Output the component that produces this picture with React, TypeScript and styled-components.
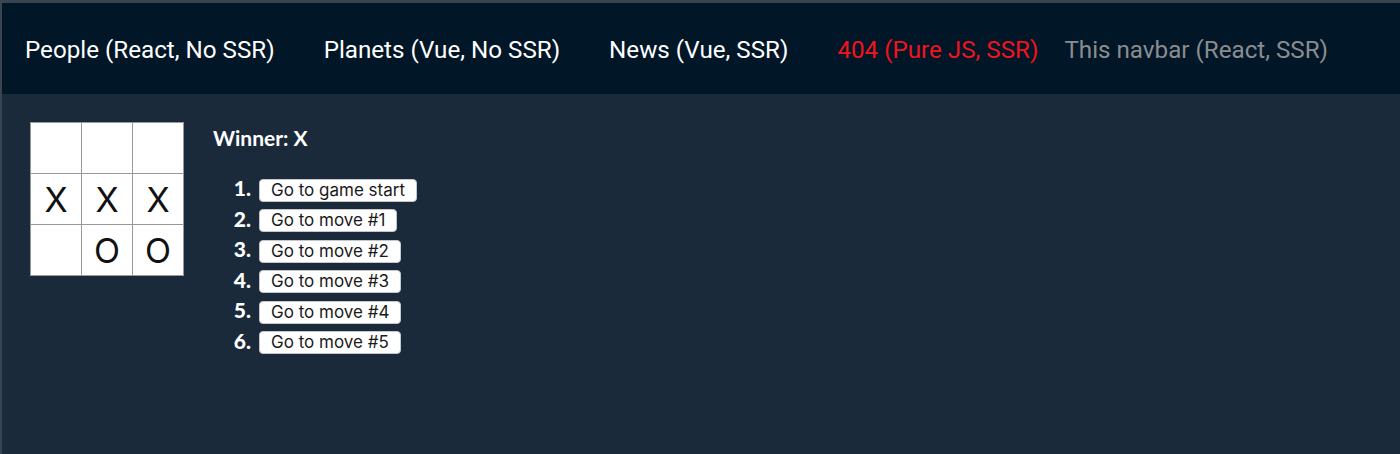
import React from "react";
import styled, { createGlobalStyle } from "styled-components";

const Global = createGlobalStyle`
  html, body { margin: 0; padding: 0; height: 100%; }
  body { background: #1b2a3a; font-family: Inter, "Noto Sans", sans-serif; }
  #root { min-height: 100%; }
`;

const Page = styled.div`
  height: 454px;
  box-sizing: border-box;
  border-top: 3px solid #3a4552;
  border-left: 2px solid #3a4552;
  background: #1b2a3a;
  display: flex;
  flex-direction: column;
`;

const Nav = styled.nav`
  height: 91px;
  background: #011627;
  display: flex;
  align-items: center;
  padding-left: 23px;
  padding-top: 2px;
  box-sizing: border-box;
`;

const NavLink = styled.a<{ $color: string; $gap: number }>`
  font-family: Roboto, "Liberation Sans", sans-serif;
  font-size: 24.2px;
  color: ${(p) => p.$color};
  text-decoration: none;
  margin-right: ${(p) => p.$gap}px;
  white-space: nowrap;
`;

const Game = styled.main`
  display: flex;
  align-items: flex-start;
  padding: 28px 0 0 28px;
  gap: 29px;
`;

const Board = styled.div`
  display: grid;
  grid-template-columns: repeat(3, 51px);
  grid-template-rows: repeat(3, 51px);
  background: #fff;
  border-right: 1px solid #999;
  border-bottom: 1px solid #999;
`;

const Square = styled.button`
  box-sizing: border-box;
  width: 51px;
  height: 51px;
  border: 0;
  border-left: 1px solid #999;
  border-top: 1px solid #999;
  background: #fff;
  padding: 0;
  margin: 0;
  font-family: Inter, "Noto Sans", sans-serif;
  font-size: 34px;
  font-weight: 400;
  color: #111;
  line-height: 51px;
  text-align: center;
`;

const Info = styled.div`
  display: flex;
  flex-direction: column;
  padding-top: 4px;
`;

const Status = styled.div`
  font-family: Lato, "Noto Sans", sans-serif;
  font-weight: 700;
  font-size: 21px;
  color: #fff;
  height: 24px;
  line-height: 24px;
`;

const Moves = styled.ol`
  margin: 29px 0 0 0;
  padding: 0 0 0 46px;
  list-style: none;
  display: flex;
  flex-direction: column;
  gap: 8px;
  counter-reset: move;
`;

const Move = styled.li`
  position: relative;
  counter-increment: move;
  height: 22.5px;
  display: flex;
  align-items: center;
  &::before {
    content: counter(move) ".";
    position: absolute;
    right: calc(100% + 8px);
    top: -3px;
    font-family: Lato, "Noto Sans", sans-serif;
    font-weight: 900;
    font-size: 21px;
    color: #fff;
    line-height: 24px;
  }
`;

const MoveButton = styled.button`
  box-sizing: border-box;
  height: 23px;
  padding: 0 11px;
  background: #fff;
  border: 1px solid #c4c8cd;
  border-radius: 4px;
  font-family: Inter, "Noto Sans", sans-serif;
  font-size: 17px;
  color: #1a1a1a;
  line-height: 21px;
  white-space: nowrap;
`;

const squares = ["", "", "", "X", "X", "X", "", "O", "O"];
const moves = [
  "Go to game start",
  "Go to move #1",
  "Go to move #2",
  "Go to move #3",
  "Go to move #4",
  "Go to move #5",
];

export default function App() {
  return (
    <>
      <Global />
      <Page>
        <Nav>
          <NavLink href="#" $color="#ffffff" $gap={49}>People (React, No SSR)</NavLink>
          <NavLink href="#" $color="#ffffff" $gap={49}>Planets (Vue, No SSR)</NavLink>
          <NavLink href="#" $color="#ffffff" $gap={49}>News (Vue, SSR)</NavLink>
          <NavLink href="#" $color="#f0141e" $gap={26}>404 (Pure JS, SSR)</NavLink>
          <NavLink href="#" $color="#8a8d90" $gap={0}>This navbar (React, SSR)</NavLink>
        </Nav>
        <Game>
          <Board>
            {squares.map((s, i) => (
              <Square key={i}>{s}</Square>
            ))}
          </Board>
          <Info>
            <Status>Winner: X</Status>
            <Moves>
              {moves.map((m) => (
                <Move key={m}>
                  <MoveButton>{m}</MoveButton>
                </Move>
              ))}
            </Moves>
          </Info>
        </Game>
      </Page>
    </>
  );
}
